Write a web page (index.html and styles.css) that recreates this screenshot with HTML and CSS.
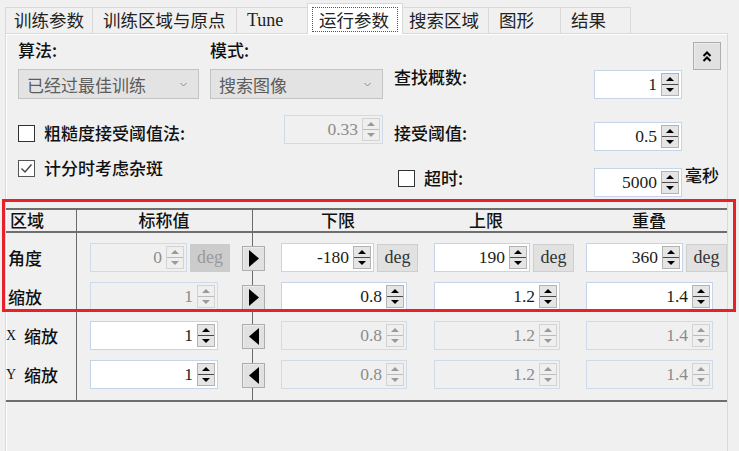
FILE: index.html
```html
<!DOCTYPE html>
<html lang="zh">
<head>
<meta charset="utf-8">
<title>运行参数</title>
<link rel="stylesheet" href="styles.css">
</head>
<body>
<div class="tabs">
  <div class="tab t1">训练参数</div>
  <div class="tab t2">训练区域与原点</div>
  <div class="tab t3 lat">Tune</div>
  <div class="tab active"><span class="focus">运行参数</span></div>
  <div class="tab t5">搜索区域</div>
  <div class="tab t6">图形</div>
  <div class="tab t7">结果</div>
</div>

<div class="panel">
  <div class="top">
    <div class="lbl a-algo">算法:</div>
    <div class="lbl a-mode">模式:</div>
    <div class="btn collapse a-collapse">
      <svg width="10" height="13" viewBox="0 0 10 13"><polyline points="1.5,6 5,2.5 8.5,6" fill="none" stroke="#000" stroke-width="2"/><polyline points="1.5,11 5,7.5 8.5,11" fill="none" stroke="#000" stroke-width="2"/></svg>
    </div>

    <div class="combo a-combo1"><span>已经过最佳训练</span><svg class="chev" width="7" height="5" viewBox="0 0 7 5"><polyline points="0.5,1 3.5,4 6.5,1" fill="none" stroke="#8a8a8a" stroke-width="1"/></svg></div>
    <div class="combo a-combo2"><span>搜索图像</span><svg class="chev" width="7" height="5" viewBox="0 0 7 5"><polyline points="0.5,1 3.5,4 6.5,1" fill="none" stroke="#8a8a8a" stroke-width="1"/></svg></div>
    <div class="lbl a-count">查找概数:</div>
    <div class="spin a-count-spin"><span class="val">1</span><span class="arrows"><i class="up"></i><i class="dn"></i></span></div>

    <div class="check a-rough"><span class="box"></span><span>粗糙度接受阈值法:</span></div>
    <div class="spin off a-rough-spin"><span class="val">0.33</span><span class="arrows"><i class="up"></i><i class="dn"></i></span></div>
    <div class="lbl a-accept">接受阈值:</div>
    <div class="spin a-accept-spin"><span class="val">0.5</span><span class="arrows"><i class="up"></i><i class="dn"></i></span></div>

    <div class="check a-noise"><span class="box checked"><svg width="15" height="15" viewBox="0 0 15 15"><polyline points="2.5,7.5 6,11 12.5,3.5" fill="none" stroke="#444" stroke-width="1.4"/></svg></span><span>计分时考虑杂斑</span></div>
    <div class="check a-timeout"><span class="box"></span><span>超时:</span></div>
    <div class="timeout a-timeout-grp">
      <div class="spin w88"><span class="val">5000</span><span class="arrows"><i class="up"></i><i class="dn"></i></span></div>
      <span class="unit">毫秒</span>
    </div>
  </div>

  <div class="table">
    <div class="thead">
      <div class="h-first">区域</div>
      <div class="h-c">标称值</div>
      <div class="h-c">下限</div>
      <div class="h-c">上限</div>
      <div class="h-c h-last">重叠</div>
    </div>
    <div class="tbody">
      <div class="row">
        <div class="rlabel">角度</div>
        <div class="cell"><div class="spin off w96"><span class="val">0</span><span class="arrows"><i class="up"></i><i class="dn"></i></span></div><div class="deg off">deg</div></div>
        <div class="cell"><div class="btn arrow"><svg width="10" height="17" viewBox="0 0 10 17"><polygon points="0,0 10,8.5 0,17" fill="#000"/></svg></div></div>
        <div class="cell"><div class="spin w92"><span class="val">-180</span><span class="arrows"><i class="up"></i><i class="dn"></i></span></div><div class="deg">deg</div></div>
        <div class="cell"><div class="spin w95"><span class="val">190</span><span class="arrows"><i class="up"></i><i class="dn"></i></span></div><div class="deg">deg</div></div>
        <div class="cell"><div class="spin w96"><span class="val">360</span><span class="arrows"><i class="up"></i><i class="dn"></i></span></div><div class="deg">deg</div></div>
      </div>
      <div class="row">
        <div class="rlabel">缩放</div>
        <div class="cell"><div class="spin off w127"><span class="val">1</span><span class="arrows"><i class="up"></i><i class="dn"></i></span></div></div>
        <div class="cell"><div class="btn arrow"><svg width="10" height="17" viewBox="0 0 10 17"><polygon points="0,0 10,8.5 0,17" fill="#000"/></svg></div></div>
        <div class="cell"><div class="spin w125"><span class="val">0.8</span><span class="arrows"><i class="up"></i><i class="dn"></i></span></div></div>
        <div class="cell"><div class="spin w125"><span class="val">1.2</span><span class="arrows"><i class="up"></i><i class="dn"></i></span></div></div>
        <div class="cell"><div class="spin w126"><span class="val">1.4</span><span class="arrows"><i class="up"></i><i class="dn"></i></span></div></div>
      </div>
      <div class="row">
        <div class="rlabel right"><span class="axis">X</span>缩放</div>
        <div class="cell"><div class="spin w127"><span class="val">1</span><span class="arrows"><i class="up"></i><i class="dn"></i></span></div></div>
        <div class="cell"><div class="btn arrow"><svg width="10" height="17" viewBox="0 0 10 17"><polygon points="10,0 0,8.5 10,17" fill="#000"/></svg></div></div>
        <div class="cell"><div class="spin off w125"><span class="val">0.8</span><span class="arrows"><i class="up"></i><i class="dn"></i></span></div></div>
        <div class="cell"><div class="spin off w125"><span class="val">1.2</span><span class="arrows"><i class="up"></i><i class="dn"></i></span></div></div>
        <div class="cell"><div class="spin off w126"><span class="val">1.4</span><span class="arrows"><i class="up"></i><i class="dn"></i></span></div></div>
      </div>
      <div class="row">
        <div class="rlabel right"><span class="axis">Y</span>缩放</div>
        <div class="cell"><div class="spin w127"><span class="val">1</span><span class="arrows"><i class="up"></i><i class="dn"></i></span></div></div>
        <div class="cell"><div class="btn arrow"><svg width="10" height="17" viewBox="0 0 10 17"><polygon points="10,0 0,8.5 10,17" fill="#000"/></svg></div></div>
        <div class="cell"><div class="spin off w125"><span class="val">0.8</span><span class="arrows"><i class="up"></i><i class="dn"></i></span></div></div>
        <div class="cell"><div class="spin off w125"><span class="val">1.2</span><span class="arrows"><i class="up"></i><i class="dn"></i></span></div></div>
        <div class="cell"><div class="spin off w126"><span class="val">1.4</span><span class="arrows"><i class="up"></i><i class="dn"></i></span></div></div>
      </div>
    </div>
  </div>
</div>

<div class="highlight"></div>
</body>
</html>
```
FILE: styles.css
```css
* { box-sizing: border-box; }
html, body { margin: 0; padding: 0; }
body {
  width: 739px;
  height: 451px;
  overflow: hidden;
  position: relative;
  background: #f0f0f0;
  font-family: "Noto Sans CJK SC", sans-serif;
  font-size: 17px;
  color: #111;
}
.lat { font-family: "Liberation Serif", serif; }

/* tabs */
.tabs {
  display: flex;
  align-items: flex-end;
  height: 33px;
  padding-left: 5px;
}
.tab {
  height: 26px;
  border: 1px solid #d9d9d9;
  border-bottom: none;
  margin-right: -1px;
  padding-left: 10px;
  line-height: 24px;
  font-size: 17.5px;
  color: #222;
  white-space: nowrap;
}
.t1 { width: 88px; padding-left: 8px; }
.t2 { width: 145px; }
.t3 { width: 72px; font-size: 18px; }
.t5 { width: 87px; padding-left: 6px; }
.t6 { width: 73px; }
.t7 { width: 71px; }
.active {
  width: 96px;
  height: 31px;
  margin-bottom: -1px;
  background: #fff;
  padding: 3px 4px 2px 4px;
  position: relative;
  z-index: 1;
}
.focus {
  display: block;
  height: 25px;
  border: 1px dotted #555;
  padding-left: 6px;
  line-height: 23px;
}

/* panel */
.panel {
  margin-left: 5px;
  width: 723px;
  height: 418px;
  border: 1px solid #d9d9d9;
  border-bottom: none;
  box-shadow: inset 1px 1px 0 #fff;
}

.top {
  display: grid;
  grid-template-columns: 181px 173px 189px 88px 28px;
  grid-template-rows: 26px 36px 50px 48px;
  column-gap: 11px;
  padding: 6px 0 0 12px;
}
.lbl { line-height: 20px; align-self: start; white-space: nowrap; font-weight: 500; }
.a-algo { grid-area: 1 / 1; }
.a-mode { grid-area: 1 / 2; }
.a-collapse { grid-area: 1 / 5 / 3 / 6; margin-top: 2px; width: 28px; height: 28px; align-self: start; }
.a-combo1 { grid-area: 2 / 1; margin-top: 3px; }
.a-combo2 { grid-area: 2 / 2; margin-top: 3px; }
.a-count { grid-area: 2 / 3; margin-top: 1px; }
.a-count-spin { grid-area: 2 / 4; margin-top: 4px; align-self: start; }
.a-rough { grid-area: 3 / 1; margin-top: 21px; }
.a-rough-spin { grid-area: 3 / 2; justify-self: end; width: 99px; margin-top: 13px; align-self: start; }
.a-accept { grid-area: 3 / 3; margin-top: 21px; }
.a-accept-spin { grid-area: 3 / 4; margin-top: 20px; align-self: start; }
.a-noise { grid-area: 4 / 1 / 5 / 3; margin-top: 6px; }
.a-timeout { grid-area: 4 / 3; margin-top: 16px; margin-left: 4px; }
.a-timeout-grp { grid-area: 4 / 4 / 5 / 6; margin-top: 16px; }

.combo {
  height: 30px;
  border: 1px solid #c4c4c4;
  background: #e3e3e3;
  color: #5c5c5c;
  display: flex;
  align-items: center;
  justify-content: space-between;
  padding: 0 11px 0 8px;
  align-self: start;
}
.chev { flex: none; }

.check {
  display: flex;
  align-items: center;
  gap: 9px;
  line-height: 20px;
  align-self: start;
  white-space: nowrap;
  font-weight: 500;
}
.box {
  width: 17px;
  height: 17px;
  border: 1px solid #333;
  background: #fff;
  display: flex;
  align-items: center;
  justify-content: center;
  flex: none;
}
.box.checked { border-color: #555; }

.timeout { display: flex; align-items: flex-start; gap: 3px; align-self: start; }
.unit { line-height: 20px; margin-top: -3px; white-space: nowrap; font-weight: 500; }

/* buttons */
.btn {
  background: #e1e1e1;
  border: 1px solid #adadad;
  box-shadow: inset 1px 1px 0 #ececec;
  display: flex;
  align-items: center;
  justify-content: center;
}

/* spin boxes */
.spin {
  display: flex;
  height: 29px;
  border: 1px solid #c5d4e6;
  background: #fff;
  padding: 1px 1px 1px 0;
  flex: none;
}
.spin .val {
  flex: 1;
  text-align: right;
  padding-right: 4px;
  font-family: "Liberation Serif", serif;
  font-size: 17.5px;
  line-height: 25px;
  color: #1b1b1b;
  white-space: nowrap;
}
.arrows {
  width: 18px;
  display: flex;
  flex-direction: column;
  margin: 1px 1px 1px 0;
  border: 1px solid #b3b3b3;
  background: #e5e5e5;
}
.arrows i {
  flex: 1;
  display: flex;
  align-items: center;
  justify-content: center;
}
.arrows i.up { border-bottom: 1px solid #4a4a4a; }
.up::after, .dn::after {
  content: "";
  width: 0;
  height: 0;
  border-left: 4px solid transparent;
  border-right: 4px solid transparent;
}
.up::after { border-bottom: 4px solid #000; }
.dn::after { border-top: 4px solid #000; }

.spin.off { background: #f0f0f0; border-color: #cfdbe9; }
.spin.off .val { color: #8c8c8c; }
.spin.off .arrows { background: #efefef; border-color: #d3d3d3; }
.spin.off .arrows i.up { border-bottom-color: #bbb; }
.spin.off .up::after { border-bottom-color: #9a9a9a; }
.spin.off .dn::after { border-top-color: #9a9a9a; }

.a-count-spin, .a-accept-spin, .w88 { width: 88px; }
.w92 { width: 93px; }
.w95 { width: 96px; }
.w96 { width: 97px; }
.w125 { width: 126px; }
.w126 { width: 127px; }
.w127 { width: 128px; }

.deg {
  width: 41px;
  height: 28px;
  background: #e1e1e1;
  border: 1px solid #cfcfcf;
  font-family: "Liberation Serif", serif;
  font-size: 18px;
  line-height: 24px;
  text-align: center;
  color: #333;
  flex: none;
}
.deg.off { background: #cccccc; border-color: #cccccc; color: #9a9a9a; width: 40px; }

/* table */
.table {
  margin-top: 8px;
  border-top: 2px solid #6e6e6e;
  border-bottom: 2px solid #6e6e6e;
  background:
    linear-gradient(#6a6a6a, #6a6a6a) 70px 0 / 1px 100% no-repeat,
    linear-gradient(#6a6a6a, #6a6a6a) 246px 0 / 1px 100% no-repeat;
  font-weight: 500;
}
.thead {
  display: grid;
  grid-template-columns: 70px 176px 172px 124px 1fr;
  height: 23px;
  border-bottom: 2px solid #6e6e6e;
  line-height: 20px;
}
.h-first { padding-left: 4px; }
.h-c { text-align: center; }
.h-last { padding-left: 23px; }

.tbody {
  display: grid;
  grid-template-columns: 84px 152px 39px 153px 152px 1fr;
  grid-auto-rows: 29px;
  row-gap: 10px;
  padding: 10px 0 11px;
}
.row { display: contents; }
.cell { display: flex; align-items: center; gap: 3px; }
.rlabel {
  width: 52px;
  display: flex;
  align-items: center;
  padding-left: 2px;
  white-space: nowrap;
}
.rlabel.right { justify-content: flex-end; padding-left: 0; }
.axis {
  font-family: "Liberation Serif", serif;
  font-size: 14px;
  margin-right: 8px;
  flex: none;
}
.arrow {
  width: 23px;
  height: 25px;
  margin-top: 2px;
}

/* annotation */
.highlight {
  position: absolute;
  left: 2px;
  top: 199px;
  width: 734px;
  height: 113px;
  border: 3px solid #e8202a;
  pointer-events: none;
}
```
